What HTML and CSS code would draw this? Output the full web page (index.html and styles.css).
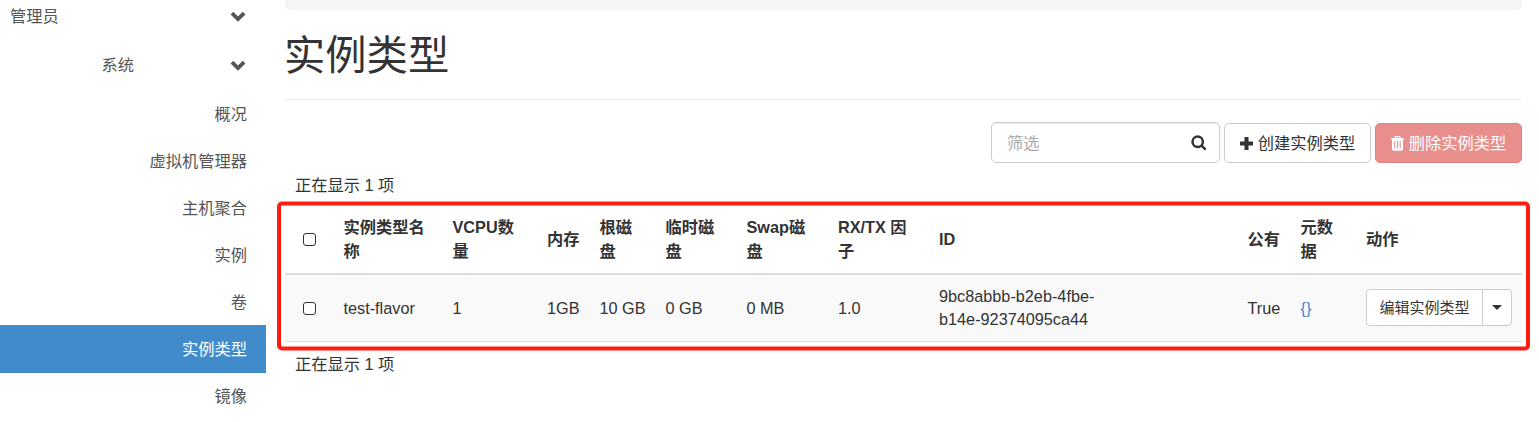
FILE: index.html
```html
<!DOCTYPE html>
<html lang="zh-CN">
<head>
<meta charset="utf-8">
<title>实例类型</title>
<link rel="stylesheet" href="styles.css">
</head>
<body>
<div class="layout">
  <nav class="sidebar">
    <div class="group"><span>管理员</span><svg class="chevron" viewBox="0 0 16 11"><path d="M1.900 2.200 8 8.200l6.100-6" /></svg></div>
    <div class="group group-sub"><span>系统</span><svg class="chevron" viewBox="0 0 16 11"><path d="M1.900 2.200 8 8.200l6.100-6" /></svg></div>
    <ul class="menu">
      <li>概况</li>
      <li>虚拟机管理器</li>
      <li>主机聚合</li>
      <li>实例</li>
      <li>卷</li>
      <li class="active">实例类型</li>
      <li>镜像</li>
    </ul>
  </nav>
  <main class="content">
    <div class="breadcrumb"></div>
    <h1 class="title">实例类型</h1>
    <div class="toolbar">
      <div class="search">
        <span>筛选</span>
        <svg class="icon-search" viewBox="0 0 16 16"><circle cx="6.700" cy="6.700" r="5.200"/><path d="m10.600 10.600 4 4"/></svg>
      </div>
      <button class="btn"><svg class="icon-plus" viewBox="0 0 13 13"><path d="M4.500 0h4v4.500H13v4H8.500V13h-4V8.500H0v-4h4.500z"/></svg>创建实例类型</button>
      <button class="btn btn-danger"><svg class="icon-trash" viewBox="0 0 13 15"><path fill-rule="evenodd" d="M4 0h5l1 2h3v1.500h-1V13q0 1.700-1.500 1.700h-8Q1 14.700 1 13V3.500H0V2h3zM4.600 1.200 4.200 2h4.600l-.4-.8zM3.300 5v7.500h1V5zm2.700 0v7.500h1V5zm2.700 0v7.500h1V5z"/></svg>删除实例类型</button>
    </div>
    <div class="count count-top">正在显示 1 项</div>
    <table class="flavors">
      <colgroup>
        <col class="c-check"><col class="c-name"><col class="c-vcpu"><col class="c-ram"><col class="c-root"><col class="c-eph"><col class="c-swap"><col class="c-rxtx"><col class="c-id"><col class="c-public"><col class="c-meta"><col>
      </colgroup>
      <thead>
        <tr>
          <th><span class="checkbox"></span></th>
          <th>实例类型名<br>称</th>
          <th>VCPU数<br>量</th>
          <th>内存</th>
          <th>根磁<br>盘</th>
          <th>临时磁<br>盘</th>
          <th>Swap磁<br>盘</th>
          <th>RX/TX 因<br>子</th>
          <th>ID</th>
          <th>公有</th>
          <th>元数<br>据</th>
          <th>动作</th>
        </tr>
      </thead>
      <tbody>
        <tr>
          <td><span class="checkbox"></span></td>
          <td class="line">test-flavor</td>
          <td class="line">1</td>
          <td class="line">1GB</td>
          <td class="line">10 GB</td>
          <td class="line">0 GB</td>
          <td class="line">0 MB</td>
          <td class="line">1.0</td>
          <td>9bc8abbb-b2eb-4fbe-<br>b14e-92374095ca44</td>
          <td class="line">True</td>
          <td class="line"><a class="link">{}</a></td>
          <td class="actions"><div class="btn-group"><button class="action">编辑实例类型</button><button class="toggle"><span class="caret"></span></button></div></td>
        </tr>
      </tbody>
    </table>
    <div class="count count-bottom">正在显示 1 项</div>
  </main>
</div>
<svg class="highlight" viewBox="0 0 1254 151"><rect x="2" y="2.500" width="1249" height="145" rx="3"/></svg>
</body>
</html>
```

FILE: styles.css
```css
* { box-sizing: border-box; }

body {
  margin: 0;
  height: 422px;
  overflow: hidden;
  position: relative;
  background: #fff;
  color: #333;
  font: 16.25px/23.2px "Liberation Sans", "Noto Sans CJK SC", sans-serif;
}

.layout { display: flex; }

/* Sidebar */
.sidebar { width: 266px; flex: none; color: #555; }
.group {
  height: 49px;
  padding: 0 20px 0 10px;
  display: flex;
  align-items: center;
  justify-content: space-between;
}
.group:first-child { height: 41px; padding-bottom: 8px; }
.group-sub { padding-left: 101.5px; }
.chevron { width: 16px; height: 11px; fill: none; stroke: #555; stroke-width: 3.8; }
.menu { list-style: none; margin: 0; padding: 0; text-align: right; }
.menu li { height: 47px; line-height: 49px; padding-right: 19px; }
.menu .active { height: 48px; margin-bottom: -1px; background: #428bca; color: #fff; }

/* Content */
.content { margin-left: 19px; width: 1237px; }
.breadcrumb { height: 10px; background: #f5f5f5; border-radius: 0 0 5px 5px; }
.title {
  margin: 0;
  height: 90px;
  border-bottom: 1px solid #eee;
  font-size: 41.3px;
  font-weight: 400;
  line-height: 92px;
  text-indent: -1px;
}
.toolbar {
  display: flex;
  align-items: flex-end;
  justify-content: flex-end;
  gap: 4px;
  margin-top: 22px;
  height: 41px;
}
.search {
  width: 229px;
  height: 41px;
  padding: 0 12px 0 15px;
  display: flex;
  align-items: center;
  justify-content: space-between;
  border: 1px solid #ccc;
  border-radius: 5px;
  box-shadow: inset 0 1px 1px rgba(0, 0, 0, .075);
  color: #aaa;
}
.search span { padding-top: 2px; }
.icon-search { width: 16px; height: 16px; fill: none; stroke: #333; stroke-width: 2.5; }
.btn {
  width: 147px;
  height: 40px;
  padding: 2px 0 0;
  display: flex;
  align-items: center;
  justify-content: center;
  gap: 5px;
  border: 1px solid #ccc;
  border-radius: 5px;
  background: #fff;
  color: #333;
  font: inherit;
  white-space: nowrap;
}
.btn svg { width: 13px; margin-bottom: 2px; fill: currentColor; }
.icon-plus { height: 13px; }
.icon-trash { height: 15px; }
.btn-danger { background: #e88f8d; border-color: #e3817e; color: #fff; }
.count { padding-left: 10px; line-height: 24px; }
.count-top { height: 42px; padding-top: 10px; }
.count-bottom { padding-top: 10px; }

/* Table */
.flavors { width: 1237px; table-layout: fixed; border-collapse: separate; border-spacing: 0; }
.c-check { width: 48.5px; }
.c-name { width: 109px; }
.c-vcpu { width: 94.5px; }
.c-ram { width: 52.5px; }
.c-root { width: 66px; }
.c-eph { width: 81px; }
.c-swap { width: 91.5px; }
.c-rxtx { width: 101px; }
.c-id { width: 308.5px; }
.c-public { width: 53px; }
.c-meta { width: 65.5px; }
th, td { padding: 0 0 0 10px; text-align: left; vertical-align: middle; white-space: nowrap; }
th { height: 70px; border-bottom: 2px solid #ddd; line-height: 24px; }
td { height: 67px; border-bottom: 1px solid #ddd; background: #f9f9f9; }
.line { padding-top: 2px; }
.actions { padding-bottom: 2px; }
.checkbox {
  display: block;
  width: 13px;
  height: 13px;
  margin-left: 7.5px;
  border: 1px solid #333;
  border-radius: 3px;
  background: #fff;
}
.link { color: #428bca; }
.btn-group { display: flex; width: 146px; height: 37px; }
.action, .toggle {
  padding: 0;
  border: 1px solid #ccc;
  background: #fff;
  color: #333;
  font: inherit;
  font-size: 15px;
}
.action { width: 117px; padding-top: 1px; border-radius: 4px 0 0 4px; }
.toggle {
  width: 30px;
  margin-left: -1px;
  display: flex;
  align-items: center;
  justify-content: center;
  border-radius: 0 4px 4px 0;
}
.caret { border: 5px solid transparent; border-top-color: #333; border-bottom: 0; }

/* Red frame laid over the table */
.highlight {
  position: absolute;
  left: 277px;
  top: 201px;
  width: 1254px;
  height: 151px;
  fill: none;
  stroke: #ff1d12;
  stroke-width: 4;
  pointer-events: none;
}
```
